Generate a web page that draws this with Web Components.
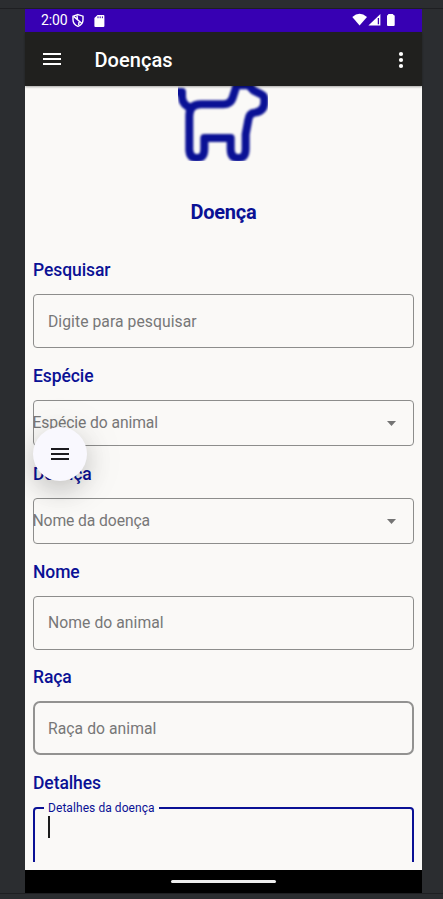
<!DOCTYPE html>
<html lang="pt"><head><meta charset="utf-8"><title>Doenças</title>
<style>
html,body{margin:0;height:100%;overflow:hidden;background:#2b2d30}
body{font-family:Roboto,sans-serif}
</style></head><body>
<emulator-window></emulator-window>
<script>
const define=(name,html)=>customElements.define(name,class extends HTMLElement{
  constructor(){super();this.attachShadow({mode:'open'}).innerHTML=html;}
});
define('status-bar',`<style>
:host{display:flex;height:23px;flex:none;background:#3700b3;color:#fff;align-items:center;padding:0 16px;box-sizing:border-box}
span{font-size:14px;line-height:23px;width:27px;letter-spacing:-.1px;white-space:nowrap}
svg{display:block}
</style><span>2:00</span>
<svg width="70" height="23" viewBox="0 0 70 23"><g fill="none" stroke="#fff" stroke-width="1.4"><path d="M10 5.6 15 7.2V10.8C15 13.9 13 16.3 10 17.3 7 16.3 5 13.9 5 10.8V7.2Z"/><path d="M5.6 7.4 14 14.5M9 6.5 9.4 10M11 13 10.7 16"/></g><path fill="#fff" d="M29.5 6H35.5Q36.4 6 36.4 7V17Q36.4 18 35.4 18H27.4Q26.4 18 26.4 17V9Z"/><path stroke="#3700b3" d="M30 7.4V9.2M32.2 7.4V9.2M34.4 7.4V9.2"/></svg>
<span style="flex:1"></span>
<svg width="54" height="23" viewBox="352 9 54 23" fill="#fff"><path d="M352.3 17Q359.5 10.5 367 17L359.6 25.5Z"/><path d="M380.4 14V25.5H368.4Z"/><path stroke="#3700b3" stroke-width="1.3" d="M378.4 18V24.3"/><path d="M387 16Q387 15 388 15V14.6Q388 14 389 14H392.6Q393.4 14 393.4 15 394.7 15 394.7 16V25Q394.7 26 393.7 26H388Q387 26 387 25Z"/></svg>`);
define('menu-icon',`<style>:host{display:flex;flex-direction:column;justify-content:space-between;width:18px;height:12px}
i{height:2px;background:currentColor}</style><i></i><i></i><i></i>`);
define('app-bar',`<style>
:host{display:flex;height:54px;flex:none;background:#20201e;color:#fff;align-items:center;padding:0 18px;box-sizing:border-box;position:relative;z-index:1;box-shadow:0 1px 2px #0005}
h1{margin:2px 0 0 33.5px;font:500 20px/24px Roboto,sans-serif;letter-spacing:.04px;flex:1}
svg{margin-top:1px}
</style><menu-icon></menu-icon><h1><slot></slot></h1>
<svg width="6" height="18" viewBox="0 0 6 18" fill="#fff"><circle cx="3" cy="3" r="2.1"/><circle cx="3" cy="9" r="2.1"/><circle cx="3" cy="15" r="2.1"/></svg>`);
define('dog-picture',`<style>:host{display:block;width:90px;height:75px;overflow:hidden}svg{display:block;filter:blur(1px)}</style>
<svg width="90" height="75" viewBox="54 18 270 225" overflow="visible" fill="none" stroke="#0a1195" stroke-width="24" stroke-linejoin="round"><path d="M45 36H66V52Q68 77 98 86M88 213V107Q88 73 123 73H190Q214 73 220 47L230 16 265 15 280 31 304 43Q313 47 313 58V70Q311 94 284 98 268 99 265 120L257 163V207Q257 234 234 234 212 234 212 207V174H133V207Q133 234 110 234 88 234 88 207"/></svg>`);
customElements.define('form-field',class extends HTMLElement{
 connectedCallback(){
  const kind=this.getAttribute('kind')||'text';
  this.attachShadow({mode:'open'}).innerHTML=`<style>
:host{display:block;margin-bottom:15.85px}
label{display:block;font:500 17.5px/24px Roboto,sans-serif;letter-spacing:-.08px;color:#0a1195;margin-bottom:12px}
.box{height:54px;box-sizing:border-box;border:1px solid #8d8d8c;border-radius:4px;display:flex;align-items:center;padding-left:14px;color:#777;font-size:15.7px;letter-spacing:.06px}
.select{height:46px;padding:0 17px 0 0;justify-content:space-between;letter-spacing:-.1px}
.select span{margin-left:-1.5px}
.strong{border:2px solid #929291;border-radius:7px;padding-left:13px}
.active{border:2px solid #0a1195;height:90px;display:block;padding:0 0 0 9px;color:#0a1195;border-radius:4px}
.active span{display:block;width:max-content;margin-top:-9px;padding:0 4px 0 4px;background:#faf9f7;font-size:12px;line-height:16px;letter-spacing:.07px}
.active i{display:block;width:2px;height:22px;background:#1b1b1b;margin-left:4px}
svg{display:block;margin-top:1px}
</style><label><slot></slot></label><div class="box ${kind}"><span>${this.getAttribute('hint')}</span>${kind==='select'?'<svg width="9" height="5" viewBox="0 0 9 5" fill="#747474"><path d="M0 0H9L4.5 5Z"/></svg>':kind==='active'?'<i></i>':''}</div>`;
 }});
define('float-button',`<style>:host{display:flex;width:54px;height:54px;border-radius:50%;background:#f9f8fe;color:#1c1b1f;align-items:center;justify-content:center;position:absolute;left:8px;top:341px;box-shadow:0 10px 26px #00000030,0 4px 50px #00000014}</style><menu-icon></menu-icon>`);
define('disease-form',`<style>
:host{display:block;flex:1;min-height:0;background:#faf9f7;padding:0 8px 8px;box-sizing:border-box;position:relative;overflow:hidden}
main{height:776px;overflow:hidden}
dog-picture{margin:0 auto 0 145px}
h2{margin:39px 0 0;font:700 20px/24px Roboto,sans-serif;color:#0a1195;text-align:center;letter-spacing:-.2px}
section{padding-top:34px}
</style><main><dog-picture></dog-picture><h2>Doença</h2><section>
<form-field hint="Digite para pesquisar">Pesquisar</form-field>
<form-field kind="select" hint="Espécie do animal">Espécie</form-field>
<form-field kind="select" hint="Nome da doença">Doença</form-field>
<form-field hint="Nome do animal">Nome</form-field>
<form-field kind="strong" hint="Raça do animal">Raça</form-field>
<form-field kind="active" hint="Detalhes da doença">Detalhes</form-field>
</section></main><float-button></float-button>`);
define('navigation-bar',`<style>:host{display:flex;height:23px;flex:none;background:#000;align-items:center;justify-content:center}
i{width:105px;height:3.5px;background:#eee;border-radius:2px}</style><i></i>`);
define('emulator-window',`<style>
:host{display:grid;grid-template-rows:9px 884px 6px;height:899px;background:#2b2d30}
.top{border-bottom:1px solid #1e1f22;box-sizing:border-box}
.bottom{border-top:1px solid #1e1f22;box-sizing:border-box}
.phone{margin-left:25px;width:397px;display:flex;flex-direction:column}
</style><div class="top"></div><div class="phone"><status-bar></status-bar><app-bar>Doenças</app-bar><disease-form></disease-form><navigation-bar></navigation-bar></div><div class="bottom"></div>`);
</script></body></html>
